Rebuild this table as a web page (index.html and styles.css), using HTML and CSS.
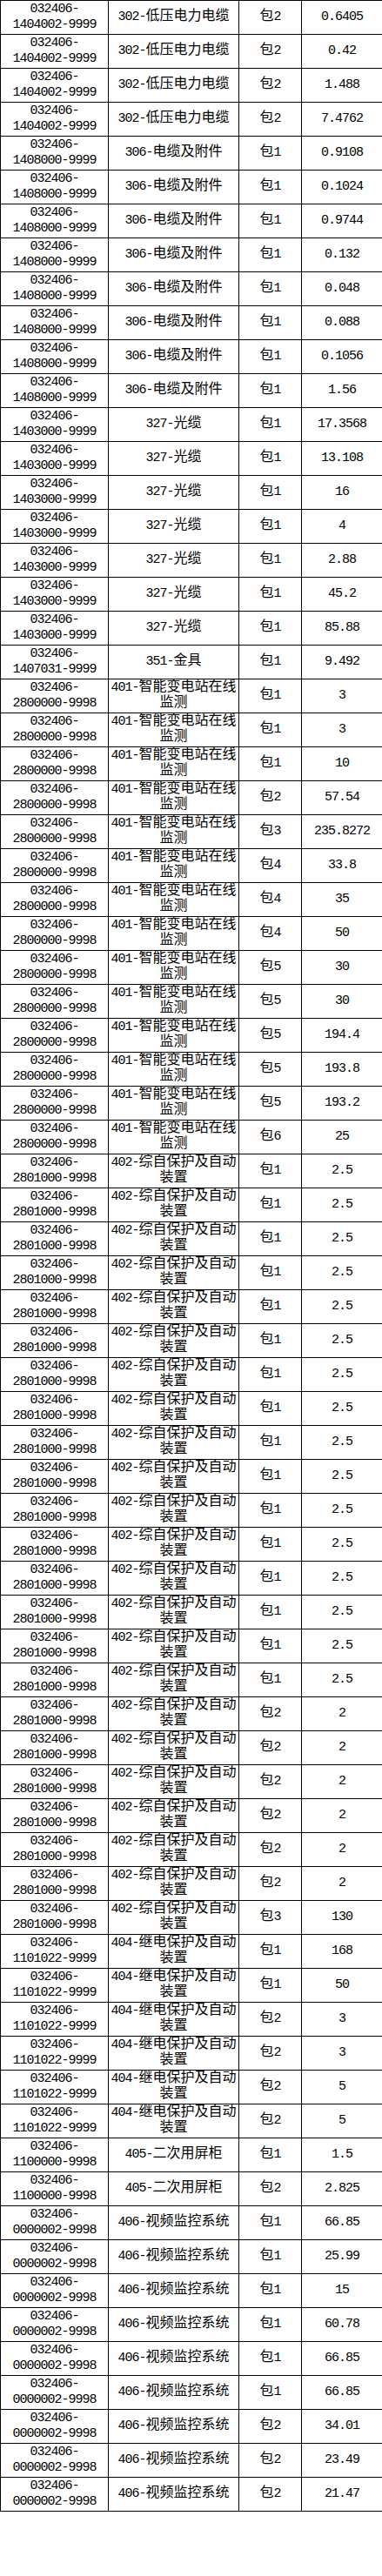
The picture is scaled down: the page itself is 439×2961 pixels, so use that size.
FILE: index.html
```html
<!DOCTYPE html>
<html lang="zh">
<head>
<meta charset="utf-8">
<title>表</title>
<link rel="stylesheet" href="styles.css">
</head>
<body>
<table class="grid">
<colgroup><col class="c1"><col class="c2"><col class="c3"><col class="c4"></colgroup>
<tbody>
<tr><td>032406-<br>1404002-9999</td><td>302-<span class="h">低压电力电缆</span></td><td><span class="h">包</span>2</td><td>0.6405</td></tr>
<tr><td>032406-<br>1404002-9999</td><td>302-<span class="h">低压电力电缆</span></td><td><span class="h">包</span>2</td><td>0.42</td></tr>
<tr><td>032406-<br>1404002-9999</td><td>302-<span class="h">低压电力电缆</span></td><td><span class="h">包</span>2</td><td>1.488</td></tr>
<tr><td>032406-<br>1404002-9999</td><td>302-<span class="h">低压电力电缆</span></td><td><span class="h">包</span>2</td><td>7.4762</td></tr>
<tr><td>032406-<br>1408000-9999</td><td>306-<span class="h">电缆及附件</span></td><td><span class="h">包</span>1</td><td>0.9108</td></tr>
<tr><td>032406-<br>1408000-9999</td><td>306-<span class="h">电缆及附件</span></td><td><span class="h">包</span>1</td><td>0.1024</td></tr>
<tr><td>032406-<br>1408000-9999</td><td>306-<span class="h">电缆及附件</span></td><td><span class="h">包</span>1</td><td>0.9744</td></tr>
<tr><td>032406-<br>1408000-9999</td><td>306-<span class="h">电缆及附件</span></td><td><span class="h">包</span>1</td><td>0.132</td></tr>
<tr><td>032406-<br>1408000-9999</td><td>306-<span class="h">电缆及附件</span></td><td><span class="h">包</span>1</td><td>0.048</td></tr>
<tr><td>032406-<br>1408000-9999</td><td>306-<span class="h">电缆及附件</span></td><td><span class="h">包</span>1</td><td>0.088</td></tr>
<tr><td>032406-<br>1408000-9999</td><td>306-<span class="h">电缆及附件</span></td><td><span class="h">包</span>1</td><td>0.1056</td></tr>
<tr><td>032406-<br>1408000-9999</td><td>306-<span class="h">电缆及附件</span></td><td><span class="h">包</span>1</td><td>1.56</td></tr>
<tr><td>032406-<br>1403000-9999</td><td>327-<span class="h">光缆</span></td><td><span class="h">包</span>1</td><td>17.3568</td></tr>
<tr><td>032406-<br>1403000-9999</td><td>327-<span class="h">光缆</span></td><td><span class="h">包</span>1</td><td>13.108</td></tr>
<tr><td>032406-<br>1403000-9999</td><td>327-<span class="h">光缆</span></td><td><span class="h">包</span>1</td><td>16</td></tr>
<tr><td>032406-<br>1403000-9999</td><td>327-<span class="h">光缆</span></td><td><span class="h">包</span>1</td><td>4</td></tr>
<tr><td>032406-<br>1403000-9999</td><td>327-<span class="h">光缆</span></td><td><span class="h">包</span>1</td><td>2.88</td></tr>
<tr><td>032406-<br>1403000-9999</td><td>327-<span class="h">光缆</span></td><td><span class="h">包</span>1</td><td>45.2</td></tr>
<tr><td>032406-<br>1403000-9999</td><td>327-<span class="h">光缆</span></td><td><span class="h">包</span>1</td><td>85.88</td></tr>
<tr><td>032406-<br>1407031-9999</td><td>351-<span class="h">金具</span></td><td><span class="h">包</span>1</td><td>9.492</td></tr>
<tr><td>032406-<br>2800000-9998</td><td>401-<span class="h">智能变电站在线监测</span></td><td><span class="h">包</span>1</td><td>3</td></tr>
<tr><td>032406-<br>2800000-9998</td><td>401-<span class="h">智能变电站在线监测</span></td><td><span class="h">包</span>1</td><td>3</td></tr>
<tr><td>032406-<br>2800000-9998</td><td>401-<span class="h">智能变电站在线监测</span></td><td><span class="h">包</span>1</td><td>10</td></tr>
<tr><td>032406-<br>2800000-9998</td><td>401-<span class="h">智能变电站在线监测</span></td><td><span class="h">包</span>2</td><td>57.54</td></tr>
<tr><td>032406-<br>2800000-9998</td><td>401-<span class="h">智能变电站在线监测</span></td><td><span class="h">包</span>3</td><td>235.8272</td></tr>
<tr><td>032406-<br>2800000-9998</td><td>401-<span class="h">智能变电站在线监测</span></td><td><span class="h">包</span>4</td><td>33.8</td></tr>
<tr><td>032406-<br>2800000-9998</td><td>401-<span class="h">智能变电站在线监测</span></td><td><span class="h">包</span>4</td><td>35</td></tr>
<tr><td>032406-<br>2800000-9998</td><td>401-<span class="h">智能变电站在线监测</span></td><td><span class="h">包</span>4</td><td>50</td></tr>
<tr><td>032406-<br>2800000-9998</td><td>401-<span class="h">智能变电站在线监测</span></td><td><span class="h">包</span>5</td><td>30</td></tr>
<tr><td>032406-<br>2800000-9998</td><td>401-<span class="h">智能变电站在线监测</span></td><td><span class="h">包</span>5</td><td>30</td></tr>
<tr><td>032406-<br>2800000-9998</td><td>401-<span class="h">智能变电站在线监测</span></td><td><span class="h">包</span>5</td><td>194.4</td></tr>
<tr><td>032406-<br>2800000-9998</td><td>401-<span class="h">智能变电站在线监测</span></td><td><span class="h">包</span>5</td><td>193.8</td></tr>
<tr><td>032406-<br>2800000-9998</td><td>401-<span class="h">智能变电站在线监测</span></td><td><span class="h">包</span>5</td><td>193.2</td></tr>
<tr><td>032406-<br>2800000-9998</td><td>401-<span class="h">智能变电站在线监测</span></td><td><span class="h">包</span>6</td><td>25</td></tr>
<tr><td>032406-<br>2801000-9998</td><td>402-<span class="h">综自保护及自动装置</span></td><td><span class="h">包</span>1</td><td>2.5</td></tr>
<tr><td>032406-<br>2801000-9998</td><td>402-<span class="h">综自保护及自动装置</span></td><td><span class="h">包</span>1</td><td>2.5</td></tr>
<tr><td>032406-<br>2801000-9998</td><td>402-<span class="h">综自保护及自动装置</span></td><td><span class="h">包</span>1</td><td>2.5</td></tr>
<tr><td>032406-<br>2801000-9998</td><td>402-<span class="h">综自保护及自动装置</span></td><td><span class="h">包</span>1</td><td>2.5</td></tr>
<tr><td>032406-<br>2801000-9998</td><td>402-<span class="h">综自保护及自动装置</span></td><td><span class="h">包</span>1</td><td>2.5</td></tr>
<tr><td>032406-<br>2801000-9998</td><td>402-<span class="h">综自保护及自动装置</span></td><td><span class="h">包</span>1</td><td>2.5</td></tr>
<tr><td>032406-<br>2801000-9998</td><td>402-<span class="h">综自保护及自动装置</span></td><td><span class="h">包</span>1</td><td>2.5</td></tr>
<tr><td>032406-<br>2801000-9998</td><td>402-<span class="h">综自保护及自动装置</span></td><td><span class="h">包</span>1</td><td>2.5</td></tr>
<tr><td>032406-<br>2801000-9998</td><td>402-<span class="h">综自保护及自动装置</span></td><td><span class="h">包</span>1</td><td>2.5</td></tr>
<tr><td>032406-<br>2801000-9998</td><td>402-<span class="h">综自保护及自动装置</span></td><td><span class="h">包</span>1</td><td>2.5</td></tr>
<tr><td>032406-<br>2801000-9998</td><td>402-<span class="h">综自保护及自动装置</span></td><td><span class="h">包</span>1</td><td>2.5</td></tr>
<tr><td>032406-<br>2801000-9998</td><td>402-<span class="h">综自保护及自动装置</span></td><td><span class="h">包</span>1</td><td>2.5</td></tr>
<tr><td>032406-<br>2801000-9998</td><td>402-<span class="h">综自保护及自动装置</span></td><td><span class="h">包</span>1</td><td>2.5</td></tr>
<tr><td>032406-<br>2801000-9998</td><td>402-<span class="h">综自保护及自动装置</span></td><td><span class="h">包</span>1</td><td>2.5</td></tr>
<tr><td>032406-<br>2801000-9998</td><td>402-<span class="h">综自保护及自动装置</span></td><td><span class="h">包</span>1</td><td>2.5</td></tr>
<tr><td>032406-<br>2801000-9998</td><td>402-<span class="h">综自保护及自动装置</span></td><td><span class="h">包</span>1</td><td>2.5</td></tr>
<tr><td>032406-<br>2801000-9998</td><td>402-<span class="h">综自保护及自动装置</span></td><td><span class="h">包</span>2</td><td>2</td></tr>
<tr><td>032406-<br>2801000-9998</td><td>402-<span class="h">综自保护及自动装置</span></td><td><span class="h">包</span>2</td><td>2</td></tr>
<tr><td>032406-<br>2801000-9998</td><td>402-<span class="h">综自保护及自动装置</span></td><td><span class="h">包</span>2</td><td>2</td></tr>
<tr><td>032406-<br>2801000-9998</td><td>402-<span class="h">综自保护及自动装置</span></td><td><span class="h">包</span>2</td><td>2</td></tr>
<tr><td>032406-<br>2801000-9998</td><td>402-<span class="h">综自保护及自动装置</span></td><td><span class="h">包</span>2</td><td>2</td></tr>
<tr><td>032406-<br>2801000-9998</td><td>402-<span class="h">综自保护及自动装置</span></td><td><span class="h">包</span>2</td><td>2</td></tr>
<tr><td>032406-<br>2801000-9998</td><td>402-<span class="h">综自保护及自动装置</span></td><td><span class="h">包</span>3</td><td>130</td></tr>
<tr><td>032406-<br>1101022-9999</td><td>404-<span class="h">继电保护及自动装置</span></td><td><span class="h">包</span>1</td><td>168</td></tr>
<tr><td>032406-<br>1101022-9999</td><td>404-<span class="h">继电保护及自动装置</span></td><td><span class="h">包</span>1</td><td>50</td></tr>
<tr><td>032406-<br>1101022-9999</td><td>404-<span class="h">继电保护及自动装置</span></td><td><span class="h">包</span>2</td><td>3</td></tr>
<tr><td>032406-<br>1101022-9999</td><td>404-<span class="h">继电保护及自动装置</span></td><td><span class="h">包</span>2</td><td>3</td></tr>
<tr><td>032406-<br>1101022-9999</td><td>404-<span class="h">继电保护及自动装置</span></td><td><span class="h">包</span>2</td><td>5</td></tr>
<tr><td>032406-<br>1101022-9999</td><td>404-<span class="h">继电保护及自动装置</span></td><td><span class="h">包</span>2</td><td>5</td></tr>
<tr><td>032406-<br>1100000-9998</td><td>405-<span class="h">二次用屏柜</span></td><td><span class="h">包</span>1</td><td>1.5</td></tr>
<tr><td>032406-<br>1100000-9998</td><td>405-<span class="h">二次用屏柜</span></td><td><span class="h">包</span>2</td><td>2.825</td></tr>
<tr><td>032406-<br>0000002-9998</td><td>406-<span class="h">视频监控系统</span></td><td><span class="h">包</span>1</td><td>66.85</td></tr>
<tr><td>032406-<br>0000002-9998</td><td>406-<span class="h">视频监控系统</span></td><td><span class="h">包</span>1</td><td>25.99</td></tr>
<tr><td>032406-<br>0000002-9998</td><td>406-<span class="h">视频监控系统</span></td><td><span class="h">包</span>1</td><td>15</td></tr>
<tr><td>032406-<br>0000002-9998</td><td>406-<span class="h">视频监控系统</span></td><td><span class="h">包</span>1</td><td>60.78</td></tr>
<tr><td>032406-<br>0000002-9998</td><td>406-<span class="h">视频监控系统</span></td><td><span class="h">包</span>1</td><td>66.85</td></tr>
<tr><td>032406-<br>0000002-9998</td><td>406-<span class="h">视频监控系统</span></td><td><span class="h">包</span>1</td><td>66.85</td></tr>
<tr><td>032406-<br>0000002-9998</td><td>406-<span class="h">视频监控系统</span></td><td><span class="h">包</span>2</td><td>34.01</td></tr>
<tr><td>032406-<br>0000002-9998</td><td>406-<span class="h">视频监控系统</span></td><td><span class="h">包</span>2</td><td>23.49</td></tr>
<tr><td>032406-<br>0000002-9998</td><td>406-<span class="h">视频监控系统</span></td><td><span class="h">包</span>2</td><td>21.47</td></tr>
</tbody>
</table>
</body>
</html>
```
FILE: styles.css
```css
html, body {
  margin: 0;
  padding: 0;
  background: #ffffff;
}

.grid {
  border-collapse: collapse;
  table-layout: fixed;
  width: 439px;
  color: #000000;
  font-family: "Liberation Mono", "Noto Sans CJK SC", monospace;
  font-size: 15px;
  letter-spacing: -1px;
}

.c1 { width: 124px; }
.c2 { width: 150px; }
.c3 { width: 72px; }
.c4 { width: 93px; }

.grid td {
  border: 1px solid #000000;
  height: 39px;
  padding: 0;
  text-align: center;
  vertical-align: middle;
  line-height: 18px;
  box-sizing: border-box;
}

.grid .h {
  font-family: "Noto Sans CJK SC", sans-serif;
  font-size: 16px;
  letter-spacing: 0;
  line-height: 0;
}
```
